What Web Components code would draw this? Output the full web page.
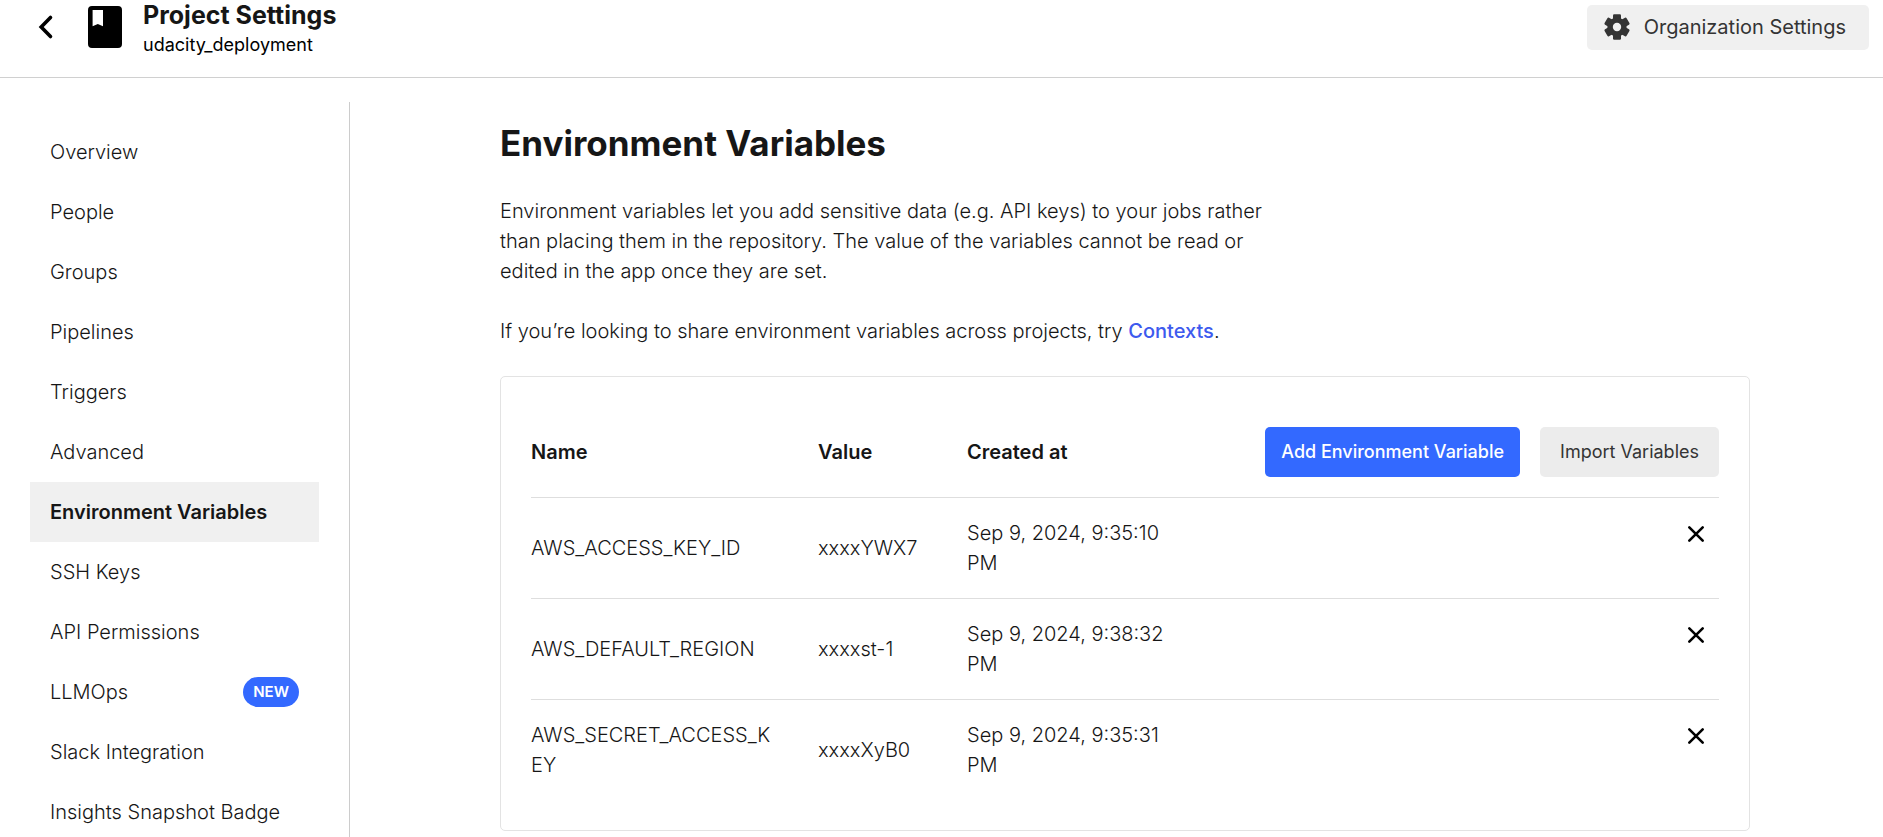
<!DOCTYPE html>
<html lang="en">
<head>
<meta charset="utf-8">
<title>Project Settings</title>
<style>
html,body{margin:0;background:#fff}
body{font-family:Inter,"Liberation Sans",sans-serif;font-size:20px;line-height:30px;font-weight:300;color:#161616;overflow:hidden;height:100vh}
</style>
</head>
<body>
<settings-page></settings-page>
<script>
const define = (name, html) => customElements.define(name, class extends HTMLElement {
  constructor() {
    super();
    this.attachShadow({ mode: 'open' }).innerHTML = html;
  }
});

define('page-header', `
<style>
:host{display:flex;align-items:flex-start;height:77px;border-bottom:1px solid #d0d0d0;padding:0 14px 0 36px}
.bar{display:flex;align-items:center;flex:1;height:54px}
svg{display:block}
.back{display:block;margin-right:32px}
.book{margin-right:20px}
.titles{flex:1;align-self:flex-start}
h1{margin:0;font-size:25px;line-height:30px;font-weight:700}
p{margin:0;font-size:18px;line-height:30px;font-weight:400;color:#000}
button{display:flex;align-items:center;gap:14px;height:45px;border:0;border-radius:5px;background:#f0f0f0;color:#343434;font:400 20px/30px Inter,"Liberation Sans",sans-serif;padding:0 23px 0 17px}
</style>
<div class="bar">
<a class="back" href="#projects" aria-label="Back"><svg width="20" height="28" viewBox="0 0 20 28"><path d="M14.500 4.500 5.200 14l9.300 9.500" fill="none" stroke="#000" stroke-width="3.600" stroke-linecap="round"/></svg></a>
<svg class="book" width="35" height="42" viewBox="0 0 35 42"><path fill="#000" fill-rule="evenodd" d="M4 0h26a4 4 0 0 1 4 4v34a4 4 0 0 1-4 4H4a4 4 0 0 1-4-4V4a4 4 0 0 1 4-4ZM4.600 4v16.200l5.200-2.200 5.200 2.200V4Z"/></svg>
<div class="titles"><h1>Project Settings</h1><p>udacity_deployment</p></div>
<button type="button"><svg width="26" height="26" viewBox="-13 -13 26 26"><g fill="#343434"><circle r="9.600"/><rect x="-4" y="-12.700" width="8" height="25.400" rx="1.200"/><rect x="-4" y="-12.700" width="8" height="25.400" rx="1.200" transform="rotate(60)"/><rect x="-4" y="-12.700" width="8" height="25.400" rx="1.200" transform="rotate(120)"/></g><circle r="4.200" fill="#f0f0f0"/></svg>Organization Settings</button>
</div>`);

define('new-badge', `
<style>
:host{display:block;background:#3369ff;color:#fff;border-radius:15px;padding:0 10px;font-size:15px;line-height:30px;font-weight:600}
</style><slot></slot>`);

define('nav-item', `
<style>
:host{display:block}
a{display:flex;align-items:center;justify-content:space-between;height:60px;padding:0 20px;color:inherit;text-decoration:none}
:host([active]) a{background:#f0f0f0;font-weight:600}
</style><a href="#"><slot></slot><slot name="badge"></slot></a>`);

define('settings-nav', `
<style>
:host{display:block;flex:none;width:289px;padding:20px 30px;border-right:1px solid #ccc}
</style>
<nav>
<nav-item>Overview</nav-item>
<nav-item>People</nav-item>
<nav-item>Groups</nav-item>
<nav-item>Pipelines</nav-item>
<nav-item>Triggers</nav-item>
<nav-item>Advanced</nav-item>
<nav-item active>Environment Variables</nav-item>
<nav-item>SSH Keys</nav-item>
<nav-item>API Permissions</nav-item>
<nav-item>LLMOps<new-badge slot="badge">NEW</new-badge></nav-item>
<nav-item>Slack Integration</nav-item>
<nav-item>Insights Snapshot Badge</nav-item>
</nav>`);

define('action-button', `
<style>
:host{display:block}
button{display:block;height:50px;border:0;border-radius:5px;padding:0 20px;background:#ececec;color:#343434;font:400 18px/30px Inter,"Liberation Sans",sans-serif;white-space:nowrap}
:host([primary]) button{padding:0 16px;background:#3369ff;color:#fff;font-weight:500}
</style><button type="button"><slot></slot></button>`);

const variables = [
  ['AWS_ACCESS_KEY_ID', 'xxxxYWX7', 'Sep 9, 2024, 9:35:10 PM'],
  ['AWS_DEFAULT_REGION', 'xxxxst-1', 'Sep 9, 2024, 9:38:32 PM'],
  ['AWS_SECRET_ACCESS_KEY', 'xxxxXyB0', 'Sep 9, 2024, 9:35:31 PM'],
];

define('variables-table', `
<style>
:host{display:block;border:1px solid #e3e3e3;border-radius:5px;padding:30px}
table{width:100%;border-collapse:separate;border-spacing:0;table-layout:fixed}
th,td{padding:20px 0;text-align:left;border-bottom:1px solid #dedede;font-weight:inherit}
thead th{font-weight:600}
tbody tr:last-child>*{border-bottom:0}
.name{width:247px;padding-right:40px;overflow-wrap:anywhere}
.value{width:149px}
.date{width:210px;padding-right:10px}
.actions{display:flex;justify-content:flex-end;gap:20px}
td:last-child{vertical-align:top}
.remove{display:block;margin-left:auto;border:0;background:none;padding:6px 13px}
.remove svg{display:block}
</style>
<table>
<thead><tr><th class="name">Name</th><th class="value">Value</th><th class="date">Created at</th><th><div class="actions"><action-button primary>Add Environment Variable</action-button><action-button>Import Variables</action-button></div></th></tr></thead>
<tbody>${variables.map(([n, v, d]) => `<tr><th class="name" scope="row">${n}</th><td>${v}</td><td class="date">${d}</td><td><button class="remove" type="button" aria-label="Remove ${n}"><svg width="20" height="20" viewBox="0 0 20 20"><path d="M3.300 3.300 16.700 16.700M16.700 3.300 3.300 16.700" stroke="#000" stroke-width="2.600" stroke-linecap="round"/></svg></button></td></tr>`).join('')}</tbody>
</table>`);

define('environment-variables', `
<style>
:host{display:block;flex:1;min-width:0;padding:18px 133px 40px 150px}
h2{margin:0 0 30px;font-size:35px;line-height:46px;font-weight:700}
.intro{max-width:800px}
p{margin:0 0 30px}
a{color:#3d5aee;font-weight:500;text-decoration:none}
</style>
<div class="intro">
<h2>Environment Variables</h2>
<p>Environment variables let you add sensitive data (e.g. API keys) to your jobs rather than placing them in the repository. The value of the variables cannot be read or edited in the app once they are set.</p>
<p>If you’re looking to share environment variables across projects, try <a href="#contexts">Contexts</a>.</p>
</div>
<variables-table></variables-table>`);

define('settings-page', `
<style>
:host{display:block}
.body{display:flex;padding-top:24px}
</style>
<page-header></page-header>
<div class="body"><settings-nav></settings-nav><environment-variables></environment-variables></div>`);
</script>
</body>
</html>
